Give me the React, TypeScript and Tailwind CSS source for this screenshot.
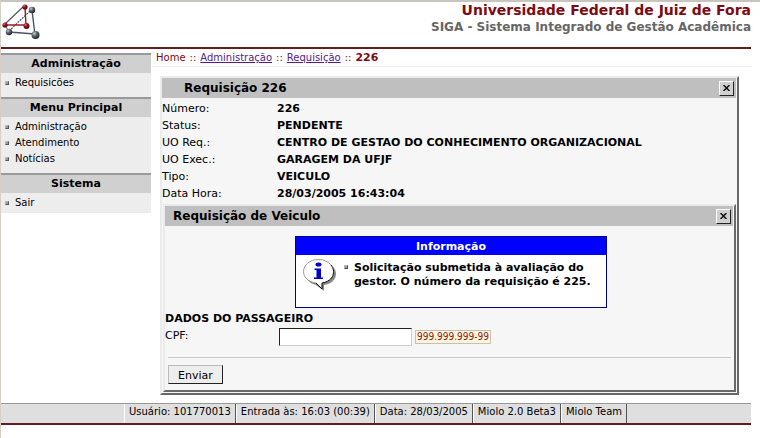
import React from "react";

const menus = [
  { title: "Administração", items: ["Requisicões"], pad: "pb-1.5" },
  { title: "Menu Principal", items: ["Administração", "Atendimento", "Notícias"], pad: "pb-1.5" },
  { title: "Sistema", items: ["Sair"], pad: "pb-0.5" },
];

const details = [
  ["Número:", "226"],
  ["Status:", "PENDENTE"],
  ["UO Req.:", "CENTRO DE GESTAO DO CONHECIMENTO ORGANIZACIONAL"],
  ["UO Exec.:", "GARAGEM DA UFJF"],
  ["Tipo:", "VEICULO"],
  ["Data Hora:", "28/03/2005 16:43:04"],
];

const statusItems = [
  "Usuário: 101770013",
  "Entrada às: 16:03 (00:39)",
  "Data: 28/03/2005",
  "Miolo 2.0 Beta3",
  "Miolo Team",
];

function Bullet() {
  return (
    <span className="block size-1 shrink-0 border border-t-[#b8b8b8] border-l-[#b8b8b8] border-r-[#555] border-b-[#555] bg-[#999]" />
  );
}

function Logo() {
  return (
    <svg width="42" height="40" viewBox="0 0 42 40" aria-label="UFJF" role="img">
      <defs>
        <radialGradient id="red" cx="0.35" cy="0.3" r="0.7">
          <stop offset="0" stopColor="#d28a90" />
          <stop offset="0.4" stopColor="#98101c" />
          <stop offset="1" stopColor="#4a0810" />
        </radialGradient>
        <radialGradient id="steel" cx="0.35" cy="0.3" r="0.7">
          <stop offset="0" stopColor="#c3cad4" />
          <stop offset="0.45" stopColor="#606875" />
          <stop offset="1" stopColor="#20242c" />
        </radialGradient>
      </defs>
      <g fill="none" strokeWidth="1.1">
        <path d="M4 22 23 4" stroke="#50505c" />
        <path d="M8 29 30 8" stroke="#3c3c48" strokeDasharray="2 1" />
        <path d="M4 23 8 30" stroke="#666c78" />
        <path d="M31 8 34 33M8 30 34 32" stroke="#4c535f" strokeWidth="1.4" />
        <path d="M24 5 25 24M4 23 25 23" stroke="#a01828" strokeWidth="1.4" />
      </g>
      <circle cx="24" cy="5" r="2.600" fill="url(#red)" />
      <circle cx="4" cy="23" r="2.600" fill="url(#red)" />
      <circle cx="25.500" cy="24" r="3" fill="url(#red)" />
      <circle cx="31" cy="8" r="3.200" fill="url(#steel)" />
      <circle cx="8" cy="30" r="3.200" fill="url(#steel)" />
      <circle cx="34.500" cy="33" r="4" fill="url(#steel)" />
    </svg>
  );
}

function InfoIcon() {
  return (
    <svg width="33" height="33" viewBox="0 0 33 33" className="shrink-0" aria-hidden="true">
      <path
        d="M17 3C8.500 3 3 8 3 14.500 3 21 7 24.500 13 26l8 6v-6C28 25 33 21 33 14.500 33 8 26 3 17 3Z"
        fill="#888"
      />
      <path
        d="M15.500 0.500C7 0.500 0.500 6 0.500 12.500 0.500 19 6 23 13 24l6 6v-6C26 23 31 18.500 31 12.500 31 6 24 0.500 15.500 0.500Z"
        fill="#fff"
      />
      <path
        d="M13 24C6 23 0.500 19 0.500 12.500 0.500 6 7 0.500 15.500 0.500 21 0.500 25.500 3 28 6"
        fill="none"
        stroke="#999"
      />
      <path d="M28 6c5 6 3 16-9 18v6l-6-6" fill="none" stroke="#000" />
      <ellipse cx="15.500" cy="5.500" rx="3" ry="2" fill="#0000c8" />
      <path d="M11.500 9.500h6.500v9h2v1.500h-9v-1.500h2.500v-7.500h-2Z" fill="#0000c8" />
    </svg>
  );
}

function TitleBar({ title, indent }: { title: string; indent: string }) {
  return (
    <div className="mr-px flex h-5 items-center justify-between bg-[#bfbfbf] pr-0.5">
      <h2 className={`${indent} text-[12px] font-bold`}>{title}</h2>
      <button
        type="button"
        aria-label="Fechar"
        className="flex size-[15px] items-center justify-center border border-t-white border-l-white border-r-[#222] border-b-[#222] bg-[#d0d0d0]"
      >
        <svg width="7" height="6" viewBox="0 0 7 6" aria-hidden="true">
          <path d="M.5 0 6.500 6M6.500 0 .5 6" stroke="#111" strokeWidth="1.500" />
        </svg>
      </button>
    </div>
  );
}

const panel =
  "border-2 border-t-[#ebebeb] border-l-[#ebebeb] border-r-[#696969] border-b-[#696969] bg-[#f6f6f6]";

export default function App() {
  return (
    <div className="min-h-screen border-t-2 border-l border-t-[#c8c5bf] border-l-[#d4d0c8] bg-white pr-[9px] font-['DejaVu_Sans',sans-serif] text-[11px] leading-[17px] text-black">
      <header className="flex h-[47px] items-start justify-between border-b-2 border-[#641c1f]">
        <Logo />
        <div className="text-right font-bold">
          <h1 className="text-[14px] text-[#7d0a10]">Universidade Federal de Juiz de Fora</h1>
          <p className="text-[12px] text-[#666]">SIGA - Sistema Integrado de Gestão Acadêmica</p>
        </div>
      </header>

      <div className="flex items-start">
        <nav className="mt-1 w-[150px] shrink-0 bg-[#ededed]">
          {menus.map((menu) => (
            <section key={menu.title} className={`border-t-2 border-[#999] ${menu.pad}`}>
              <h2 className="h-[18px] bg-[#d0d0d0] text-center text-[11px] leading-[18px] font-bold">
                {menu.title}
              </h2>
              <ul className="pt-0.5 text-[10px] leading-4">
                {menu.items.map((item) => (
                  <li key={item} className="flex items-center gap-1.5 pl-1">
                    <Bullet />
                    <a href="#">{item}</a>
                  </li>
                ))}
              </ul>
            </section>
          ))}
        </nav>

        <main className="min-w-0 flex-1">
          <div className="ml-px flex h-[18px] items-center gap-1 border-b border-[#ededed] pl-1 text-[10px]">
            <a href="#" className="text-[#7d0a10]">Home</a>
            <span className="text-[#7d0a10]">::</span>
            <a href="#" className="text-[#551a8b] underline">Administração</a>
            <span className="text-[#7d0a10]">::</span>
            <a href="#" className="text-[#551a8b] underline">Requisição</a>
            <span className="text-[#7d0a10]">::</span>
            <span className="text-[11px] font-bold text-[#7d0a10]">226</span>
          </div>

          <section className={`${panel} mt-[9px] mr-3 ml-[9px] pb-px`}>
            <TitleBar title="Requisição 226" indent="pl-[22px]" />
            <dl className="grid grid-cols-[115px_1fr] pt-0.5 pb-0.5">
              {details.map(([label, value]) => (
                <React.Fragment key={label}>
                  <dt>{label}</dt>
                  <dd className="font-bold">{value}</dd>
                </React.Fragment>
              ))}
            </dl>

            <section className={`${panel} mr-px ml-px`}>
              <TitleBar title="Requisição de Veiculo" indent="pl-2" />
              <div className="flex justify-center pt-2.5 pb-0.5 pl-[3px]">
                <div className="h-[72px] w-[312px] border border-[#00008b] bg-white font-bold">
                  <h3 className="h-[18px] bg-[#0000ff] text-center leading-5 text-white">
                    Informação
                  </h3>
                  <div className="flex pt-1 pl-[7px]">
                    <InfoIcon />
                    <div className="flex gap-1.5 pt-0.5 pl-2">
                      <div className="pt-1">
                        <Bullet />
                      </div>
                      <p className="w-[252px] leading-[14px]">
                        Solicitação submetida à avaliação do gestor. O número da requisição é 225.
                      </p>
                    </div>
                  </div>
                </div>
              </div>
              <form onSubmit={(e) => e.preventDefault()}>
                <h3 className="font-bold">DADOS DO PASSAGEIRO</h3>
                <div className="flex items-center pt-px">
                  <label htmlFor="cpf" className="w-[114px] self-start leading-4">CPF:</label>
                  <input
                    id="cpf"
                    type="text"
                    className="h-[18px] w-[133px] border border-t-[#222] border-l-[#222] border-r-[#ccc] border-b-[#ccc] bg-white px-0.5 outline-none"
                  />
                  <span className="ml-[3px] h-[14px] border border-[#c8c0b0] bg-[#fff5dc] px-px font-['DejaVu_Sans_Condensed','DejaVu_Sans',sans-serif] text-[10px] leading-3 text-[#8b1a10]">
                    999.999.999-99
                  </span>
                </div>
                <div className="mx-[3px] mt-[11px] border-t border-[#c8c8c8] pt-[7px] pb-1.5">
                  <button
                    type="submit"
                    className="flex h-[19px] w-[55px] items-center justify-center border border-t-[#bbb] border-l-[#bbb] border-r-[#222] border-b-[#222] bg-[#ededed] pt-0.5"
                  >
                    Enviar
                  </button>
                </div>
              </form>
            </section>
          </section>
        </main>
      </div>

      <footer className="mt-2 flex h-[22px] border-t border-b-2 border-t-[#999] border-b-[#641c1f] bg-[#dfdfdf] pl-[123px] text-[10px]">
        {statusItems.map((item) => (
          <span
            key={item}
            className="border-r border-l border-r-[#555] border-l-white px-1 leading-[15px]"
          >
            {item}
          </span>
        ))}
      </footer>
    </div>
  );
}
